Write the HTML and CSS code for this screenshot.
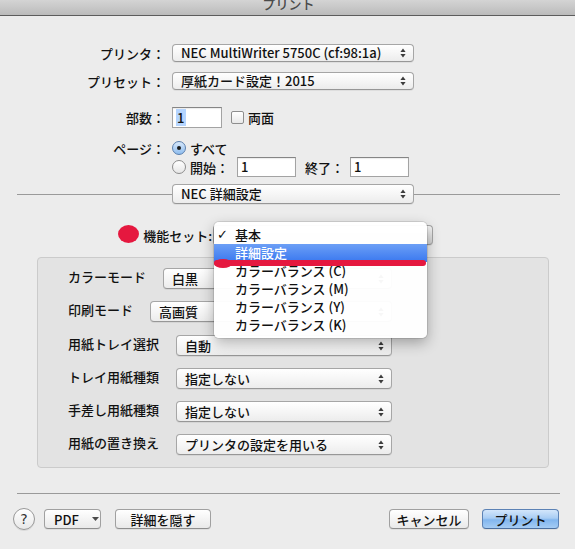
FILE: index.html
```html
<!DOCTYPE html>
<html lang="ja">
<head>
<meta charset="utf-8">
<title>プリント</title>
<link rel="stylesheet" href="styles.css">
</head>
<body>
<div class="titlebar"><span class="title">プリント</span></div>

<div class="content">
  <div class="row row-printer">
    <span class="form-label">プリンタ：</span>
    <div class="popup popup-top">
      <span>NEC MultiWriter 5750C (cf:98:1a)</span>
      <svg class="updown" viewBox="0 0 6 10" width="6" height="10"><path d="M0.4 4 L3 0.6 L5.6 4Z M0.4 6 L3 9.4 L5.6 6Z"/></svg>
    </div>
  </div>

  <div class="row row-preset">
    <span class="form-label">プリセット：</span>
    <div class="popup popup-top">
      <span>厚紙カード設定！2015</span>
      <svg class="updown" viewBox="0 0 6 10" width="6" height="10"><path d="M0.4 4 L3 0.6 L5.6 4Z M0.4 6 L3 9.4 L5.6 6Z"/></svg>
    </div>
  </div>

  <div class="row row-copies">
    <span class="form-label">部数：</span>
    <div class="field field-copies"><span class="sel-text">1</span></div>
    <span class="checkbox"></span>
    <span class="opt-text">両面</span>
  </div>

  <div class="row row-pages">
    <span class="form-label">ページ：</span>
    <span class="radio radio-on"></span>
    <span class="opt-text">すべて</span>
  </div>

  <div class="row row-range">
    <span class="form-label"></span>
    <span class="radio"></span>
    <span class="opt-text">開始：</span>
    <div class="field field-range field-from">1</div>
    <span class="range-end">終了：</span>
    <div class="field field-range field-to">1</div>
  </div>

  <div class="sep-row">
    <span class="line line-left"></span>
    <div class="popup popup-top">
      <span>NEC 詳細設定</span>
      <svg class="updown" viewBox="0 0 6 10" width="6" height="10"><path d="M0.4 4 L3 0.6 L5.6 4Z M0.4 6 L3 9.4 L5.6 6Z"/></svg>
    </div>
    <span class="line line-right"></span>
  </div>

  <div class="feature-row">
    <span class="feature-label">機能セット:</span>
    <div class="popup popup-feature"></div>
  </div>

  <div class="groupbox">
    <div class="g-row">
      <span class="g-label">カラーモード</span>
      <div class="popup popup-g">
        <span>白黒</span>
        <svg class="updown" viewBox="0 0 6 10" width="6" height="10"><path d="M0.4 4 L3 0.6 L5.6 4Z M0.4 6 L3 9.4 L5.6 6Z"/></svg>
      </div>
    </div>
    <div class="g-row">
      <span class="g-label">印刷モード</span>
      <div class="popup popup-g">
        <span>高画質</span>
        <svg class="updown" viewBox="0 0 6 10" width="6" height="10"><path d="M0.4 4 L3 0.6 L5.6 4Z M0.4 6 L3 9.4 L5.6 6Z"/></svg>
      </div>
    </div>
    <div class="g-row g-row-shift">
      <span class="g-label">用紙トレイ選択</span>
      <div class="popup popup-g">
        <span>自動</span>
        <svg class="updown" viewBox="0 0 6 10" width="6" height="10"><path d="M0.4 4 L3 0.6 L5.6 4Z M0.4 6 L3 9.4 L5.6 6Z"/></svg>
      </div>
    </div>
    <div class="g-row">
      <span class="g-label">トレイ用紙種類</span>
      <div class="popup popup-g">
        <span>指定しない</span>
        <svg class="updown" viewBox="0 0 6 10" width="6" height="10"><path d="M0.4 4 L3 0.6 L5.6 4Z M0.4 6 L3 9.4 L5.6 6Z"/></svg>
      </div>
    </div>
    <div class="g-row">
      <span class="g-label">手差し用紙種類</span>
      <div class="popup popup-g">
        <span>指定しない</span>
        <svg class="updown" viewBox="0 0 6 10" width="6" height="10"><path d="M0.4 4 L3 0.6 L5.6 4Z M0.4 6 L3 9.4 L5.6 6Z"/></svg>
      </div>
    </div>
    <div class="g-row">
      <span class="g-label">用紙の置き換え</span>
      <div class="popup popup-g">
        <span>プリンタの設定を用いる</span>
        <svg class="updown" viewBox="0 0 6 10" width="6" height="10"><path d="M0.4 4 L3 0.6 L5.6 4Z M0.4 6 L3 9.4 L5.6 6Z"/></svg>
      </div>
    </div>
  </div>

  <div class="bottom-sep"></div>

  <div class="button-row">
    <span class="help">?</span>
    <span class="btn btn-pdf">PDF<svg class="pdf-arrow" viewBox="0 0 7 4" width="7" height="4"><path d="M0 0 L7 0 L3.5 4Z"/></svg></span>
    <span class="btn btn-hide">詳細を隠す</span>
    <span class="spacer"></span>
    <span class="btn btn-cancel">キャンセル</span>
    <span class="btn btn-print">プリント</span>
  </div>
</div>

<span class="mark-dot"></span>

<div class="menu">
  <div class="menu-item"><span class="check">✓</span>基本</div>
  <div class="menu-item menu-item-hl"><span class="check"></span>詳細設定</div>
  <div class="menu-item"><span class="check"></span>カラーバランス (C)</div>
  <div class="menu-item"><span class="check"></span>カラーバランス (M)</div>
  <div class="menu-item"><span class="check"></span>カラーバランス (Y)</div>
  <div class="menu-item"><span class="check"></span>カラーバランス (K)</div>
</div>

<span class="mark-line"></span>
<span class="mark-blob"></span>
</body>
</html>
```

FILE: styles.css
```css
html, body {
  margin: 0;
  padding: 0;
}

body {
  width: 575px;
  height: 549px;
  overflow: hidden;
  position: relative;
  background: #ececec;
  font-family: "Noto Sans CJK JP", "Noto Sans", sans-serif;
  font-size: 13px;
  font-weight: 500;
  color: #111;
}

.titlebar {
  height: 15px;
  border-bottom: 1px solid #5c5c5c;
  background: linear-gradient(#d4d4d4, #bbbbbb);
  text-align: center;
  overflow: hidden;
}

.title {
  display: block;
  line-height: 13px;
  margin-top: -3px;
  padding-left: 2px;
  color: #4a4a4a;
}

.content {
  padding-top: 28px;
}

.row {
  display: flex;
  align-items: center;
}

.form-label {
  width: 165px;
  flex: none;
  text-align: right;
  margin-right: 7px;
}

.row-printer { height: 18px; }
.row-preset { height: 18px; margin-top: 10px; }
.row-copies { height: 21px; margin-top: 17px; }
.row-pages { height: 14px; margin-top: 13px; }
.row-range { height: 20px; margin-top: 2px; }

/* popup buttons */
.popup {
  box-sizing: border-box;
  display: flex;
  align-items: center;
  justify-content: space-between;
  border: 1px solid #a6a6a6;
  border-bottom-color: #979797;
  border-radius: 4px;
  background: linear-gradient(#ffffff, #f6f6f6 50%, #ececec);
  box-shadow: 0 1px 0 rgba(0, 0, 0, 0.06);
  padding: 0 7px 0 8px;
  white-space: nowrap;
  line-height: 16px;
}

.popup-top {
  width: 242px;
  height: 18px;
}

.updown {
  flex: none;
  fill: #3c3c3c;
}

/* text fields */
.field {
  box-sizing: border-box;
  background: #fff;
  border: 1px solid #a3a3a3;
  border-top-color: #858585;
  box-shadow: inset 0 1px 1px rgba(0, 0, 0, 0.08);
  padding-left: 3px;
  line-height: 18px;
}

.field-copies {
  width: 50px;
  height: 21px;
  display: flex;
  align-items: center;
}

.sel-text {
  background: #b5d5ff;
  line-height: 17px;
  padding: 0 2px 0 1px;
}

.field-range {
  width: 59px;
  height: 20px;
}

.field-from { margin-left: 8px; }
.field-to { margin-left: 6px; }

.range-end { margin-left: 9px; }

.checkbox {
  box-sizing: border-box;
  width: 13px;
  height: 13px;
  margin-left: 9px;
  border: 1px solid #8e8e8e;
  border-radius: 2px;
  background: linear-gradient(#ffffff, #e9e9e9);
}

.opt-text {
  margin-left: 4px;
}

.radio {
  box-sizing: border-box;
  flex: none;
  width: 14px;
  height: 14px;
  border-radius: 50%;
  border: 1px solid #8c8c8c;
  background: linear-gradient(#ffffff, #e6e6e6);
  display: flex;
  align-items: center;
  justify-content: center;
}

.radio-on {
  border-color: #5a7fae;
  background: linear-gradient(#d7e8fb, #8fbdee);
}

.radio-on::after {
  content: "";
  width: 4px;
  height: 4px;
  border-radius: 50%;
  background: #1a1a1a;
}

/* separator with NEC popup */
.sep-row {
  display: flex;
  align-items: center;
  margin: 7px 15px 0 17px;
  height: 20px;
}

.sep-row .popup-top {
  height: 20px;
}

.line {
  height: 1px;
  background: #9a9a9a;
}

.line-left { width: 155px; }
.line-right { flex: 1; }

/* feature set row */
.feature-row {
  display: flex;
  align-items: center;
  height: 20px;
  margin-top: 21px;
  padding-left: 143px;
}

.feature-label {
  width: 69px;
  text-align: right;
  margin-right: 1px;
}

.popup-feature {
  width: 220px;
  height: 20px;
  background: linear-gradient(#f6f6f6, #d2d2d2);
}

/* group box */
.groupbox {
  box-sizing: border-box;
  width: 512px;
  height: 211px;
  margin: 12px 0 0 37px;
  padding: 10px 156px 0 30px;
  background: #e3e3e3;
  border: 1px solid #cbcbcb;
  border-radius: 4px;
}

.g-row {
  display: flex;
  align-items: flex-start;
  height: 21px;
  margin-top: 12px;
}

.g-row:first-child { margin-top: 0; }
.g-row-shift { margin-top: 13px; }

.g-label {
  flex: none;
  line-height: 17px;
}

.popup-g {
  flex: 1;
  height: 21px;
  margin-left: 17px;
}

/* bottom */
.bottom-sep {
  height: 1px;
  background: #9a9a9a;
  margin: 25px 15px 0 17px;
}

.button-row {
  display: flex;
  align-items: center;
  height: 22px;
  margin-top: 14px;
  padding: 0 16px 0 13px;
}

.help {
  box-sizing: border-box;
  width: 22px;
  height: 22px;
  border-radius: 50%;
  border: 1px solid #989898;
  background: linear-gradient(#ffffff, #e8e8e8);
  box-shadow: 0 1px 0 rgba(0, 0, 0, 0.08);
  display: flex;
  align-items: center;
  justify-content: center;
  font-family: "DejaVu Sans", sans-serif;
  font-size: 14px;
  font-weight: normal;
  color: #333;
}

.btn {
  box-sizing: border-box;
  height: 20px;
  display: flex;
  align-items: center;
  justify-content: center;
  border: 1px solid #a0a0a0;
  border-bottom-color: #8e8e8e;
  border-radius: 4px;
  background: linear-gradient(#ffffff, #f4f4f4 50%, #e9e9e9);
  box-shadow: 0 1px 0 rgba(0, 0, 0, 0.06);
  white-space: nowrap;
}

.btn-pdf {
  width: 57px;
  margin-left: 9px;
  justify-content: flex-start;
  padding-left: 9px;
}

.pdf-arrow {
  margin-left: 13px;
  fill: #4a4a4a;
}

.btn-hide {
  width: 96px;
  margin-left: 14px;
}

.spacer { flex: 1; }

.btn-cancel { width: 80px; }

.btn-print {
  width: 77px;
  margin-left: 13px;
  border-color: #5c82b5;
  border-bottom-color: #4b6f9f;
  background: linear-gradient(#d3e6fb, #a9cdf4 45%, #82b6ee 55%, #a5ccf4);
}

/* dropdown menu overlay */
.menu {
  position: absolute;
  left: 214px;
  top: 222px;
  width: 213px;
  height: 116px;
  box-sizing: border-box;
  padding-top: 4px;
  background: rgba(255, 255, 255, 0.96);
  border-radius: 5px;
  box-shadow: 0 0 0 1px rgba(0, 0, 0, 0.1), 0 5px 14px rgba(0, 0, 0, 0.3);
}

.menu-item {
  height: 18px;
  line-height: 18px;
  display: flex;
  align-items: center;
  white-space: nowrap;
}

.check {
  width: 21px;
  flex: none;
  box-sizing: border-box;
  padding-left: 3px;
  font-family: "DejaVu Sans", sans-serif;
  font-size: 13px;
  font-weight: bold;
}

.menu-item-hl {
  color: #fff;
  background: linear-gradient(#6c9ff6, #3a78ef);
}

/* red annotation marks */
.mark-dot {
  position: absolute;
  left: 118px;
  top: 225px;
  width: 21px;
  height: 18px;
  border-radius: 50%;
  background: #e5183f;
}

.mark-line {
  position: absolute;
  left: 214px;
  top: 260px;
  width: 212px;
  height: 6px;
  border-radius: 3px;
  background: #e5183f;
}

.mark-blob {
  position: absolute;
  left: 214px;
  top: 259px;
  width: 18px;
  height: 9px;
  border-radius: 50%;
  background: #e5183f;
}
```
